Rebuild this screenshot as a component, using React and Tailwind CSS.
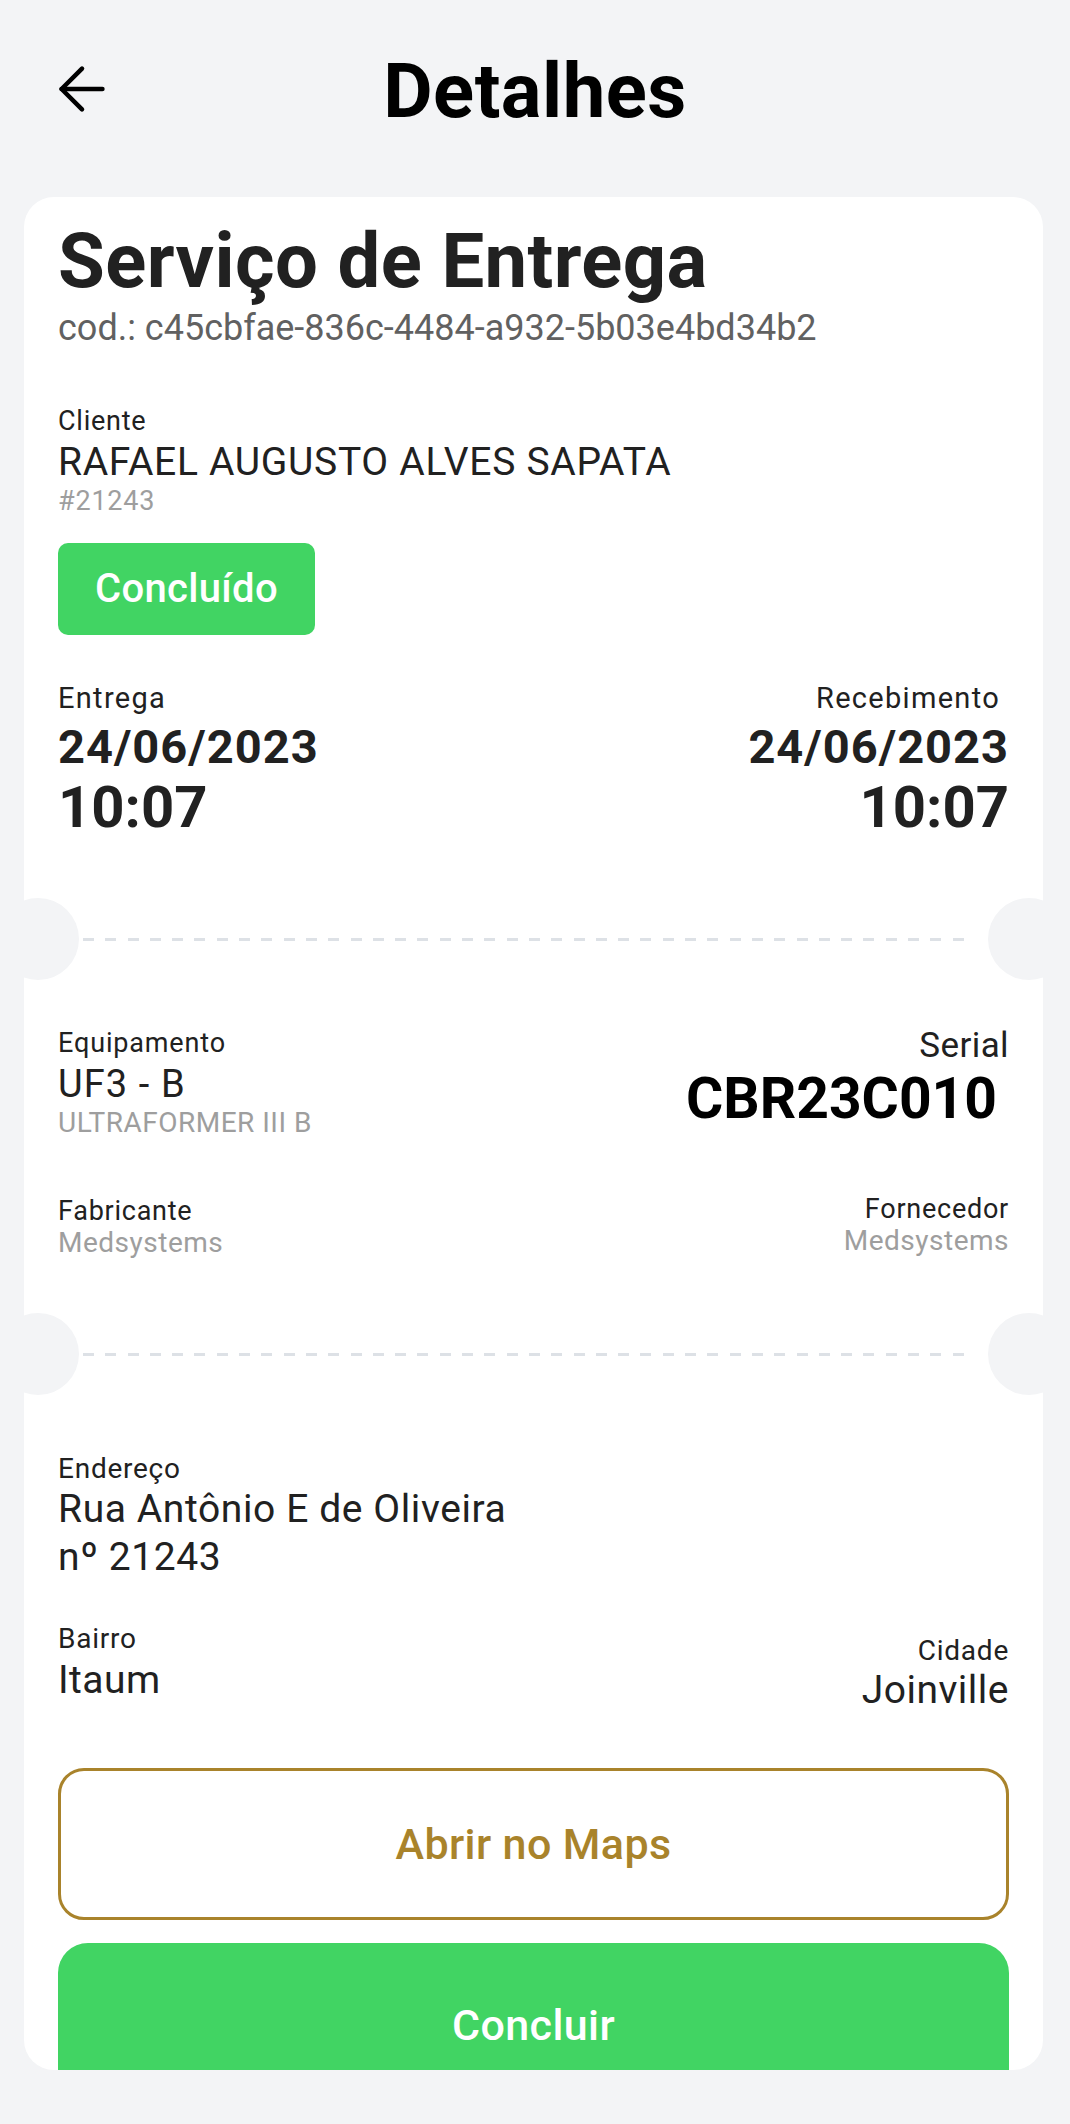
import React from "react";

const Notch = ({ side }) => (
  <div
    className={
      "absolute top-0 w-[82px] h-[82px] rounded-full bg-[#f3f4f6] " +
      (side === "left" ? "-left-[27px]" : "-right-[27px]")
    }
  />
);

const Separator = ({ className = "" }) => (
  <div className={"relative h-[82px] flex items-center " + className}>
    <Notch side="left" />
    <Notch side="right" />
    <div className="ml-[59px] mr-[69px] flex-1 h-[3px] bg-[repeating-linear-gradient(90deg,#dde1e6_0_11px,transparent_11px_22.3px)]" />
  </div>
);

const Label = ({ children, className = "" }) => (
  <div className={"text-[27px] leading-[32px] tracking-[0.75px] text-[#212121] " + className}>
    {children}
  </div>
);

const Muted = ({ children, className = "" }) => (
  <div className={"text-[28px] leading-[32px] tracking-[0.5px] text-[#9e9e9e] " + className}>
    {children}
  </div>
);

export default function App() {
  return (
    <div className="w-full h-[2124px] overflow-hidden bg-[#f3f4f6] font-['Roboto',_'Noto_Sans',_sans-serif]">
      {/* Header */}
      <div className="grid grid-cols-[140px_1fr_140px] items-center pt-[53px]">
        <button className="pl-[47px] -mt-[4px] text-black">
          <svg
            width="70"
            height="70"
            viewBox="0 0 24 24"
            fill="none"
            stroke="currentColor"
            strokeWidth="1.55"
            strokeLinecap="round"
            strokeLinejoin="round"
          >
            <path d="M19 12H5" />
            <path d="m12 19-7-7 7-7" />
          </svg>
        </button>
        <h1 className="text-center text-[76px] leading-[76px] tracking-[0.5px] font-bold text-black">
          Detalhes
        </h1>
        <div />
      </div>

      {/* Card */}
      <div className="mt-[68px] ml-[24px] mr-[27px] h-[1873px] bg-white rounded-[30px] overflow-hidden">
        <div className="px-[34px] pt-[26px]">
          <h2 className="text-[76px] leading-[76px] tracking-[0.4px] font-bold text-[#212121]">
            Serviço de Entrega
          </h2>
          <div className="mt-[9px] text-[36px] leading-[40px] text-[#616161]">
            cod.: c45cbfae-836c-4484-a932-5b03e4bd34b2
          </div>

          <Label className="mt-[57px]">Cliente</Label>
          <div className="mt-[2px] text-[39px] leading-[46px] tracking-[0.7px] text-[#212121]">
            RAFAEL AUGUSTO ALVES SAPATA
          </div>
          <div className="text-[27px] leading-[32px] tracking-[0.8px] text-[#9e9e9e]">#21243</div>

          <div className="mt-[26px] w-[257px] h-[92px] rounded-[10px] bg-[#41d463] flex items-center justify-center text-white text-[40px] tracking-[0.3px] font-medium">
            Concluído
          </div>

          <div className="mt-[46px] flex justify-between">
            <div>
              <div className="text-[29px] leading-[34px] tracking-[1.3px] text-[#212121]">Entrega</div>
              <div className="mt-[5px] text-[47px] leading-[54px] tracking-[1px] font-bold text-[#212121]">
                24/06/2023
              </div>
              <div className="mt-[1px] text-[58px] leading-[64px] font-bold text-[#212121]">
                10:07
              </div>
            </div>
            <div className="text-right">
              <div className="pr-[9px] text-[29px] leading-[34px] tracking-[1.3px] text-[#212121]">
                Recebimento
              </div>
              <div className="mt-[5px] text-[47px] leading-[54px] tracking-[1px] font-bold text-[#212121]">
                24/06/2023
              </div>
              <div className="mt-[1px] text-[58px] leading-[64px] font-bold text-[#212121]">
                10:07
              </div>
            </div>
          </div>
        </div>

        <Separator className="mt-[59px]" />

        <div className="px-[34px]">
          <div className="mt-[47px] flex justify-between items-start">
            <div>
              <Label className="tracking-[0.85px]">Equipamento</Label>
              <div className="mt-[3px] text-[38px] leading-[44px] tracking-[1.1px] text-[#212121]">
                UF3 - B
              </div>
              <Muted className="mt-[1px]">ULTRAFORMER III B</Muted>
            </div>
            <div className="text-right -mt-[1px]">
              <div className="text-[35px] leading-[40px] tracking-[0.4px] text-[#212121]">Serial</div>
              <div className="mt-[1px] pr-[12px] text-[57px] leading-[64px] font-bold text-black">
                CBR23C010
              </div>
            </div>
          </div>

          <div className="mt-[56px] flex justify-between items-start">
            <div>
              <Label>Fabricante</Label>
              <Muted>Medsystems</Muted>
            </div>
            <div className="text-right -mt-[2px]">
              <Label>Fornecedor</Label>
              <Muted>Medsystems</Muted>
            </div>
          </div>
        </div>

        <Separator className="mt-[54px]" />

        <div className="px-[34px]">
          <Label className="mt-[58px] text-[28px] tracking-[0.5px]">Endereço</Label>
          <div className="text-[39px] leading-[48px] tracking-[0.6px] text-[#212121]">
            Rua Antônio E de Oliveira
            <br />
            nº 21243
          </div>

          <div className="mt-[42px] flex justify-between items-start">
            <div>
              <Label className="text-[28px] tracking-[0.5px]">Bairro</Label>
              <div className="mt-[2px] text-[39px] leading-[46px] tracking-[0.5px] text-[#212121]">
                Itaum
              </div>
            </div>
            <div className="mt-[12px] text-right">
              <Label className="text-[28px] tracking-[0.5px]">Cidade</Label>
              <div className="text-[39px] leading-[46px] tracking-[0.5px] text-[#212121]">
                Joinville
              </div>
            </div>
          </div>

          <button className="mt-[55px] w-full h-[152px] rounded-[26px] border-[3px] border-[#a9832b] bg-white text-[#a9832b] text-[43px] tracking-[0.4px] font-medium">
            Abrir no Maps
          </button>
          <button className="mt-[23px] w-full h-[164px] rounded-[30px] bg-[#41d463] text-white text-[43px] tracking-[0.4px] font-medium">
            Concluir
          </button>
        </div>
      </div>
    </div>
  );
}
